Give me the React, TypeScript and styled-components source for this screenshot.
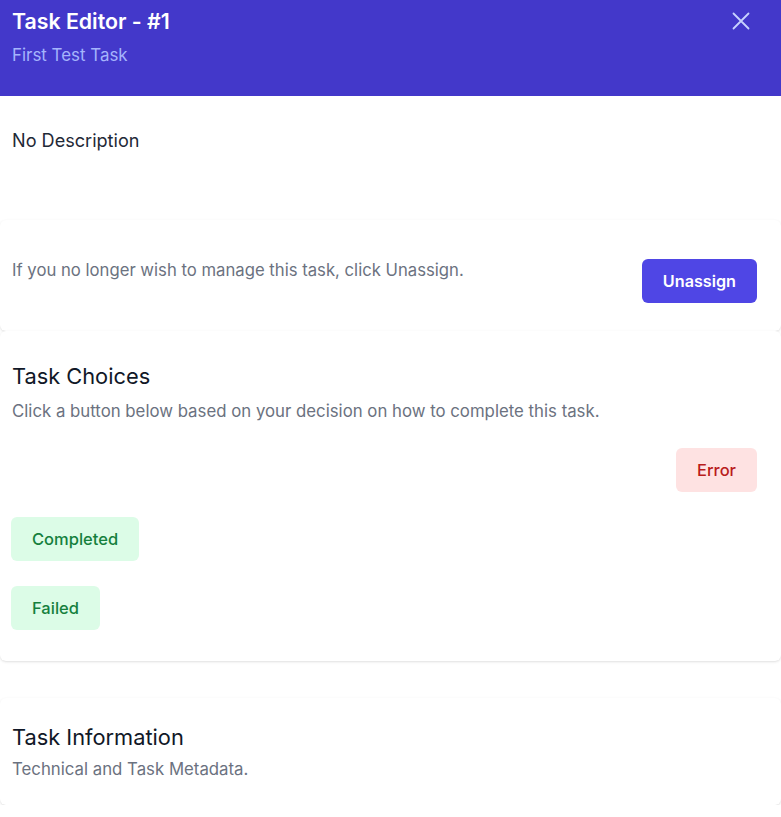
import React from "react";
import styled, { createGlobalStyle } from "styled-components";

const Global = createGlobalStyle`
  html, body { margin: 0; padding: 0; background: #ffffff; }
  body { font-family: Inter, "Noto Sans", sans-serif; -webkit-font-smoothing: antialiased; }
  * { box-sizing: border-box; }
`;

const Page = styled.div`
  width: 781px;
  display: flex;
  flex-direction: column;
`;

const Header = styled.header`
  height: 96px;
  background: #4338ca;
  padding: 7px 12px 0 12px;
  display: flex;
  justify-content: space-between;
  align-items: flex-start;
`;

const TitleBlock = styled.div`
  display: flex;
  flex-direction: column;
  gap: 8px;
`;

const Title = styled.h1`
  margin: 0;
  font-size: 21.3px;
  line-height: 28px;
  font-weight: 600;
  color: #ffffff;
`;

const Subtitle = styled.p`
  margin: 0;
  font-size: 16.9px;
  line-height: 24px;
  color: #a5b4fc;
`;

const CloseButton = styled.button`
  margin: 5px 19px 0 0;
  padding: 0;
  border: 0;
  background: transparent;
  color: #c7d2fe;
  width: 18px;
  height: 18px;
  display: flex;
  cursor: pointer;
`;

const Card = styled.section<{ $pad: string; $mt?: number }>`
  background: #ffffff;
  border-radius: 6px;
  box-shadow: 0 1px 3px 0 rgba(0, 0, 0, 0.1), 0 1px 2px -1px rgba(0, 0, 0, 0.1);
  padding: ${(p) => p.$pad};
  margin-top: ${(p) => p.$mt ?? 0}px;
`;

const DescriptionBlock = styled.div`
  height: 124px;
  padding: 32px 12px 0 12px;
  font-size: 18.1px;
  line-height: 24px;
  color: #1f2937;
`;

const Row = styled.div`
  display: flex;
  justify-content: space-between;
  align-items: flex-start;
`;

const Muted = styled.p`
  margin: 0;
  font-size: 16.7px;
  line-height: 24px;
  color: #6b7280;
`;

const SectionTitle = styled.h2`
  margin: 0;
  font-size: 21.8px;
  line-height: 28px;
  font-weight: 400;
  color: #111827;
`;

const SectionDesc = styled.p<{ $mt: number }>`
  margin: ${(p) => p.$mt}px 0 0 0;
  font-size: 16.8px;
  line-height: 24px;
  color: #6b7280;
`;

const Btn = styled.button<{ $tone: "primary" | "red" | "green"; $mt?: number }>`
  border: 0;
  border-radius: 6px;
  padding: 10px 21px;
  margin-top: ${(p) => p.$mt ?? 0}px;
  font-family: Inter, "Noto Sans", sans-serif;
  font-size: ${(p) => (p.$tone === "primary" ? 16.2 : 16.5)}px;
  line-height: 24px;
  font-weight: ${(p) => (p.$tone === "primary" ? 600 : 500)};
  cursor: pointer;
  background: ${(p) =>
    p.$tone === "primary" ? "#4f46e5" : p.$tone === "red" ? "#fee2e2" : "#dcfce7"};
  color: ${(p) =>
    p.$tone === "primary" ? "#ffffff" : p.$tone === "red" ? "#b91c1c" : "#15803d"};
`;

const ChoiceList = styled.div`
  display: flex;
  flex-direction: column;
  align-items: flex-start;
  gap: 25px;
  margin: 25px 0 0 -1px;
`;

const ChoiceRight = styled.div`
  align-self: stretch;
  display: flex;
  justify-content: flex-end;
`;

export default function App() {
  return (
    <>
      <Global />
      <Page>
        <Header>
          <TitleBlock>
            <Title>Task Editor - #1</Title>
            <Subtitle>First Test Task</Subtitle>
          </TitleBlock>
          <CloseButton aria-label="Close">
            <svg width="18" height="18" viewBox="0 0 18 18" fill="none" stroke="currentColor" strokeWidth="1.8" strokeLinecap="round">
              <path d="M1.5 1.5 L16.5 16.5 M16.5 1.5 L1.5 16.5" />
            </svg>
          </CloseButton>
        </Header>
        <DescriptionBlock>No Description</DescriptionBlock>
        <Card $pad="38px 24px 28px 12px">
          <Row>
            <Muted>If you no longer wish to manage this task, click Unassign.</Muted>
            <Btn $tone="primary" $mt={1}>Unassign</Btn>
          </Row>
        </Card>
        <Card $pad="31px 24px 31px 12px">
          <SectionTitle>Task Choices</SectionTitle>
          <SectionDesc $mt={9}>Click a button below based on your decision on how to complete this task.</SectionDesc>
          <ChoiceList>
            <ChoiceRight>
              <Btn $tone="red">Error</Btn>
            </ChoiceRight>
            <Btn $tone="green">Completed</Btn>
            <Btn $tone="green">Failed</Btn>
          </ChoiceList>
        </Card>
        <Card $pad="25px 24px 24px 12px" $mt={37}>
          <SectionTitle>Task Information</SectionTitle>
          <SectionDesc $mt={6}>Technical and Task Metadata.</SectionDesc>
        </Card>
      </Page>
    </>
  );
}
